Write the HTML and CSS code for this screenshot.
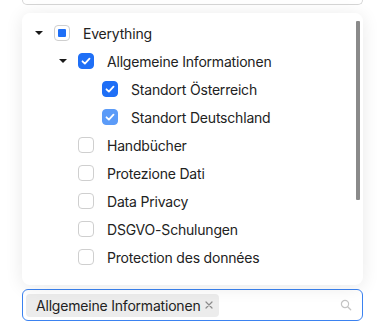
FILE: index.html
```html
<!DOCTYPE html>
<html>
<head>
<meta charset="UTF-8">
<title>Tree Select</title>
<link rel="stylesheet" href="styles.css">
</head>
<body>
	<div class="prevField"></div>

	<div class="dropdown">
		<div class="scrollThumb"></div>
		<ul class="tree">
			<li class="row level0">
				<span class="caret"></span>
				<span class="box partial"><span class="dot"></span></span>
				<span class="label">Everything</span>
			</li>
			<li class="row level1">
				<span class="caret"></span>
				<span class="box checked">
					<svg viewBox="0 0 16 16" width="16" height="16"><path d="M4.5 8.3l2.4 2.3 4.6-5" fill="none" stroke="#fff" stroke-width="1.8" stroke-linecap="round" stroke-linejoin="round"/></svg>
				</span>
				<span class="label">Allgemeine Informationen</span>
			</li>
			<li class="row level2">
				<span class="caret empty"></span>
				<span class="box checked">
					<svg viewBox="0 0 16 16" width="16" height="16"><path d="M4.5 8.3l2.4 2.3 4.6-5" fill="none" stroke="#fff" stroke-width="1.8" stroke-linecap="round" stroke-linejoin="round"/></svg>
				</span>
				<span class="label">Standort Österreich</span>
			</li>
			<li class="row level2">
				<span class="caret empty"></span>
				<span class="box checked hover">
					<svg viewBox="0 0 16 16" width="16" height="16"><path d="M4.5 8.3l2.4 2.3 4.6-5" fill="none" stroke="#fff" stroke-width="1.8" stroke-linecap="round" stroke-linejoin="round"/></svg>
				</span>
				<span class="label">Standort Deutschland</span>
			</li>
			<li class="row level1">
				<span class="caret empty"></span>
				<span class="box"></span>
				<span class="label">Handbücher</span>
			</li>
			<li class="row level1">
				<span class="caret empty"></span>
				<span class="box"></span>
				<span class="label">Protezione Dati</span>
			</li>
			<li class="row level1">
				<span class="caret empty"></span>
				<span class="box"></span>
				<span class="label">Data Privacy</span>
			</li>
			<li class="row level1">
				<span class="caret empty"></span>
				<span class="box"></span>
				<span class="label">DSGVO-Schulungen</span>
			</li>
			<li class="row level1">
				<span class="caret empty"></span>
				<span class="box"></span>
				<span class="label">Protection des données</span>
			</li>
		</ul>
	</div>

	<div class="selectField">
		<span class="tag">Allgemeine Informationen
			<svg class="tagClose" viewBox="0 0 10 10" width="10" height="10"><path d="M2 2l6 6M8 2l-6 6" stroke="#8a8a8a" stroke-width="1.2" stroke-linecap="round"/></svg>
		</span>
		<svg class="searchIcon" viewBox="0 0 12 12" width="12" height="12"><circle cx="5" cy="5" r="3.6" fill="none" stroke="#c4c4c4" stroke-width="1.2"/><path d="M7.7 7.7l3 3" stroke="#c4c4c4" stroke-width="1.3" stroke-linecap="round"/></svg>
	</div>
</body>
</html>
```

FILE: styles.css
```css
*{
	box-sizing: border-box;
}
body{
	margin: 0;
	background: #fff;
	font-family: 'Inter', 'Noto Sans', sans-serif;
	font-size: 14px;
	letter-spacing: -0.2px;
	color: #222;
}
.prevField{
	margin: 0 14px 0 22px;
	height: 5px;
	border: 1px solid #d6d6d6;
	border-top: none;
	border-radius: 0 0 6px 6px;
}
.dropdown{
	position: relative;
	margin: 8px 14px 0 22px;
	height: 272px;
	background: #fff;
	border-radius: 8px;
	box-shadow: 0 2px 18px rgba(0,0,0,0.09);
	padding: 6px 0 14px;
}
.scrollThumb{
	position: absolute;
	top: 8px;
	right: 3px;
	width: 4px;
	height: 179px;
	background: #8a8a8a;
	border-radius: 1px;
}
.tree{
	list-style: none;
	margin: 0;
	padding: 0;
}
.row{
	display: flex;
	align-items: center;
	height: 28px;
}
.level0{ padding-left: 9px; }
.level1{ padding-left: 33px; }
.level2{ padding-left: 57px; }
.caret{
	width: 16px;
	height: 16px;
	margin-right: 7px;
	display: flex;
	align-items: center;
	justify-content: center;
}
.caret::before{
	content: "";
	border-left: 4px solid transparent;
	border-right: 4px solid transparent;
	border-top: 4px solid #1a1a1a;
}
.caret.empty::before{
	display: none;
}
.box{
	width: 16px;
	height: 16px;
	border: 1px solid #cfcfcf;
	border-radius: 4px;
	background: #fff;
	display: flex;
	align-items: center;
	justify-content: center;
	margin-right: 13px;
	flex-shrink: 0;
}
.box.checked{
	background: #1f6ff6;
	border-color: #1f6ff6;
}
.box.checked.hover{
	background: #5b9bf8;
	border-color: #5b9bf8;
}
.box svg{
	flex-shrink: 0;
}
.dot{
	width: 8px;
	height: 8px;
	background: #1f6ff6;
	border-radius: 1px;
}
.selectField{
	margin: 4px 14px 0 22px;
	height: 32px;
	border: 1px solid #3b82f0;
	border-radius: 6px;
	display: flex;
	align-items: center;
	padding: 0 10px 0 3px;
}
.tag{
	display: flex;
	align-items: center;
	height: 23px;
	padding: 0 5px 0 10px;
	background: #ececec;
	border-radius: 4px;
	color: #222;
}
.tagClose{
	margin-left: 4px;
}
.searchIcon{
	margin-left: auto;
}
```
